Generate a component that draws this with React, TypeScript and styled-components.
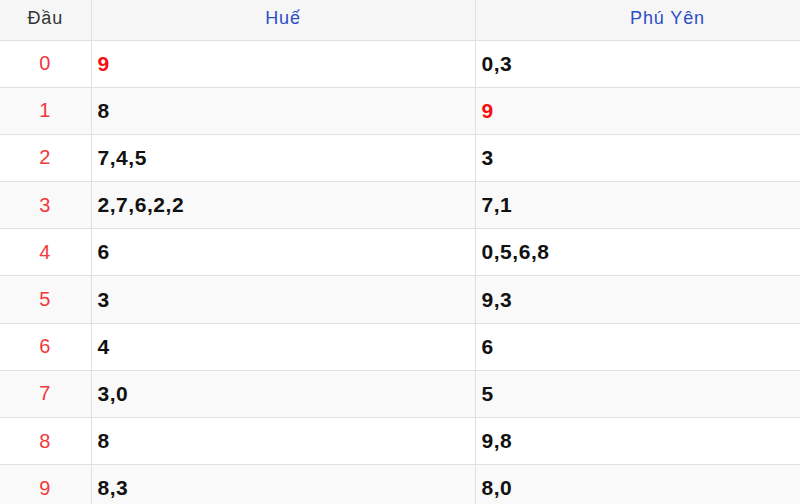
import React from "react";
import styled, { createGlobalStyle } from "styled-components";

const GlobalStyle = createGlobalStyle`
  html, body {
    margin: 0;
    padding: 0;
    background: #ffffff;
    overflow: hidden;
    font-family: "Liberation Sans", Arial, sans-serif;
  }
`;

const Page = styled.div`
  width: 800px;
  height: 504px;
  overflow: hidden;
`;

const Table = styled.table`
  width: 860px;
  table-layout: fixed;
  border-collapse: collapse;
`;

const HeadRow = styled.tr`
  height: 40px;
  background: #f6f6f6;
`;

const HeadCell = styled.th<{ $accent?: boolean }>`
  padding: 0 0 2px;
  border: 1px solid #e0e0e0;
  border-top: none;
  font-size: 18px;
  font-weight: normal;
  letter-spacing: 0.9px;
  text-align: center;
  color: ${(p) => (p.$accent ? "#2d4ec6" : "#333333")};
  &:first-child { border-left: none; }
`;

const BodyRow = styled.tr<{ $alt: boolean }>`
  height: 47.2px;
  background: ${(p) => (p.$alt ? "#f9f9f9" : "#ffffff")};
`;

const HeadNum = styled.td`
  border: 1px solid #e0e0e0;
  border-left: none;
  padding: 0;
  text-align: center;
  font-size: 20px;
  letter-spacing: 1px;
  color: #f3383b;
`;

const ValueCell = styled.td<{ $hot?: boolean }>`
  border: 1px solid #e0e0e0;
  padding: 0 0 0 6px;
  text-align: left;
  font-size: 21px;
  font-weight: bold;
  letter-spacing: 0.55px;
  color: ${(p) => (p.$hot ? "#f50f0f" : "#111111")};
`;

type Row = { head: number; hue: string; phuYen: string; hueHot?: boolean; pyHot?: boolean };

const rows: Row[] = [
  { head: 0, hue: "9", phuYen: "0,3", hueHot: true },
  { head: 1, hue: "8", phuYen: "9", pyHot: true },
  { head: 2, hue: "7,4,5", phuYen: "3" },
  { head: 3, hue: "2,7,6,2,2", phuYen: "7,1" },
  { head: 4, hue: "6", phuYen: "0,5,6,8" },
  { head: 5, hue: "3", phuYen: "9,3" },
  { head: 6, hue: "4", phuYen: "6" },
  { head: 7, hue: "3,0", phuYen: "5" },
  { head: 8, hue: "8", phuYen: "9,8" },
  { head: 9, hue: "8,3", phuYen: "8,0" },
];

export default function App() {
  return (
    <Page>
      <GlobalStyle />
      <Table>
        <colgroup>
          <col style={{ width: 91 }} />
          <col style={{ width: 384 }} />
          <col style={{ width: 385 }} />
        </colgroup>
        <thead>
          <HeadRow>
            <HeadCell>Đầu</HeadCell>
            <HeadCell $accent>Huế</HeadCell>
            <HeadCell $accent>Phú Yên</HeadCell>
          </HeadRow>
        </thead>
        <tbody>
          {rows.map((r, i) => (
            <BodyRow key={r.head} $alt={i % 2 === 1}>
              <HeadNum>{r.head}</HeadNum>
              <ValueCell $hot={r.hueHot}>{r.hue}</ValueCell>
              <ValueCell $hot={r.pyHot}>{r.phuYen}</ValueCell>
            </BodyRow>
          ))}
        </tbody>
      </Table>
    </Page>
  );
}
